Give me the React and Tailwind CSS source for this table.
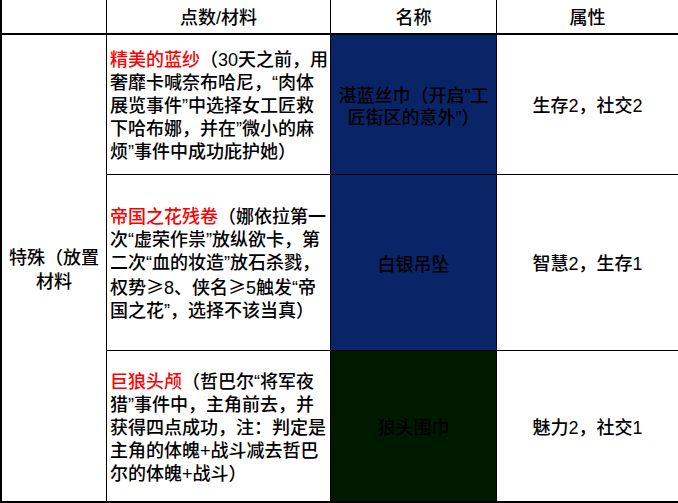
const FONT = { fontFamily: '"Liberation Sans", "Noto Sans CJK SC", sans-serif' };

const CJK = 'font-["Noto_Sans_CJK_SC",sans-serif]';

const rows = [
  {
    lines: [
      <><span className="text-[#ff0000]">精美的蓝纱</span>（30天之前，用</>,
      <>奢靡卡喊奈布哈尼，“肉体</>,
      <>展览事件”中选择女工匠救</>,
      <>下哈布娜，并在”微小的麻</>,
      <>烦”事件中成功庇护她）</>,
    ],
    name: ['湛蓝丝巾（开启“工', '匠街区的意外”）'],
    bg: 'bg-[#0a2468]',
    attr: '生存2，社交2',
  },
  {
    lines: [
      <><span className="text-[#ff0000]">帝国之花残卷</span>（娜依拉第一</>,
      <>次“虚荣作祟”放纵欲卡，第</>,
      <>二次“血的妆造”放石杀戮，</>,
      <>权势<span className={CJK}>≥</span>8、侠名<span className={CJK}>≥</span>5触发“帝</>,
      <>国之花”，选择不该当真）</>,
    ],
    name: ['白银吊坠'],
    bg: 'bg-[#0a2468]',
    attr: '智慧2，生存1',
  },
  {
    lines: [
      <><span className="text-[#ff0000]">巨狼头颅</span>（哲巴尔“将军夜</>,
      <>猎”事件中，主角前去，并</>,
      <>获得四点成功，注：判定是</>,
      <>主角的体魄+战斗减去哲巴</>,
      <>尔的体魄+战斗）</>,
    ],
    name: ['狼头围巾'],
    bg: 'bg-[#001a00]',
    attr: '魅力2，社交1',
  },
];

export default function App() {
  return (
    <div className="w-[678px] h-[503px] bg-white text-black text-[18px] font-medium" style={FONT}>
      <div className="grid grid-cols-[105px_224px_166px_1fr] grid-rows-[35px_140px_176px_150px] h-full border-l-2 border-b-2 border-black">
        <div className="border-r border-b-2 border-black" />
        <div className="border-r border-b-2 border-black flex items-center justify-center pt-1">点数/材料</div>
        <div className="border-r border-b-2 border-black flex items-center justify-center pt-1">名称</div>
        <div className="border-b-2 border-black flex items-center justify-center pt-1">属性</div>

        <div className="row-span-3 border-r border-black flex items-center justify-center text-center leading-[24px] px-1 pt-1">
          特殊（放置材料
        </div>

        {rows.map((row, i) => {
          const last = i === rows.length - 1;
          const bb = last ? '' : 'border-b';
          return [
            <div key={`m${i}`} className={`border-r ${bb} border-black flex flex-col justify-center pl-[3px] pt-1 leading-[23px] whitespace-nowrap`}>
              {row.lines.map((l, j) => (
                <div key={j}>{l}</div>
              ))}
            </div>,
            <div key={`n${i}`} className={`border-r ${bb} border-black ${row.bg} flex flex-col items-center justify-center pt-1 leading-[22px] whitespace-nowrap`}>
              {row.name.map((n, j) => (
                <div key={j}>{n}</div>
              ))}
            </div>,
            <div key={`a${i}`} className={`${bb} border-black flex items-center justify-center pt-1`}>
              {row.attr}
            </div>,
          ];
        })}
      </div>
    </div>
  );
}
